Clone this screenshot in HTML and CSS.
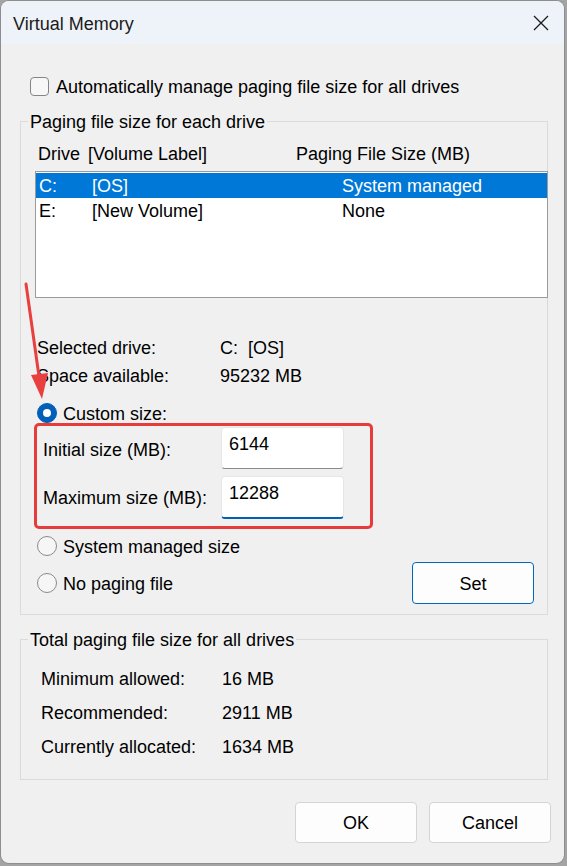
FILE: index.html
```html
<!DOCTYPE html>
<html>
<head>
<meta charset="utf-8">
<title>Virtual Memory</title>
<link rel="stylesheet" href="styles.css">
</head>
<body>
<div class="window">
  <div class="titlebar">
    <span class="title">Virtual Memory</span>
    <svg class="close" viewBox="0 0 16 16" width="16" height="16"><path d="M1 1 L15 15 M15 1 L1 15" stroke="#1b1b1b" stroke-width="1.3" fill="none"/></svg>
  </div>
  <div class="content">
    <div class="check-row"><span class="checkbox"></span><span class="txt">Automatically manage paging file size for all drives</span></div>

    <fieldset class="group group-drive">
      <legend>Paging file size for each drive</legend>
      <div class="list-head"><span class="hc1">Drive</span><span class="hc2">[Volume Label]</span><span>Paging File Size (MB)</span></div>
      <div class="listbox">
        <div class="lrow sel"><span class="c1">C:</span><span class="c2">[OS]</span><span>System managed</span></div>
        <div class="lrow"><span class="c1">E:</span><span class="c2">[New Volume]</span><span>None</span></div>
      </div>
      <div class="info first"><span class="ilabel">Selected drive:</span><span>C:&nbsp; [OS]</span></div>
      <div class="info"><span class="ilabel">Space available:</span><span>95232 MB</span></div>
      <div class="radio-row custom"><span class="radio on"></span><span class="txt">Custom size:</span></div>
      <div class="redbox">
        <div class="frow"><span class="flabel">Initial size (MB):</span><div class="field">6144</div></div>
        <div class="frow second"><span class="flabel">Maximum size (MB):</span><div class="field focus">12288</div></div>
      </div>
      <div class="radio-row sys"><span class="radio"></span><span class="txt">System managed size</span></div>
      <div class="set-row">
        <div class="radio-row"><span class="radio"></span><span class="txt">No paging file</span></div>
        <div class="btn default set">Set</div>
      </div>
    </fieldset>

    <fieldset class="group group-total">
      <legend>Total paging file size for all drives</legend>
      <div class="trow first"><span class="tlabel">Minimum allowed:</span><span>16 MB</span></div>
      <div class="trow"><span class="tlabel">Recommended:</span><span>2911 MB</span></div>
      <div class="trow"><span class="tlabel">Currently allocated:</span><span>1634 MB</span></div>
    </fieldset>

    <div class="buttons">
      <div class="btn">OK</div>
      <div class="btn">Cancel</div>
    </div>
  </div>
</div>
<svg class="arrow" width="60" height="410" viewBox="0 0 60 410">
  <line x1="26" y1="284" x2="39.5" y2="380" stroke="#e8403f" stroke-width="3" stroke-linecap="round"/>
  <polygon points="42,399 31,375 48,373" fill="#e8403f"/>
</svg>
</body>
</html>
```
FILE: styles.css
```css
* { box-sizing: border-box; }
html, body { margin: 0; padding: 0; }
body {
  background: #a4a4a4;
  width: 567px;
  height: 866px;
  overflow: hidden;
  position: relative;
  font-family: "Liberation Sans", Arial, sans-serif;
  font-size: 18px;
  color: #000;
}
.window {
  margin: 1px 0 0 1px;
  width: 563px;
  height: 862px;
  background: #f0f0f0;
  border-radius: 8px;
  overflow: hidden;
  box-shadow: 0 0 0 1px #8e8e8e;
  display: flex;
  flex-direction: column;
}
.titlebar {
  height: 43px;
  flex: none;
  background: #eef3f9;
  display: flex;
  align-items: center;
  justify-content: space-between;
  padding: 0 15px 0 12px;
}
.title { color: #1b1b1b; padding-top: 3px; }
.close { display: block; margin-top: 1px; }
.content { padding: 0 16px 0 19px; }
.txt { padding-top: 3px; }

.check-row { margin-top: 30px; height: 24px; display: flex; align-items: center; padding-left: 10px; }
.checkbox {
  width: 19px; height: 19px;
  border: 1px solid #858585; border-radius: 4px;
  background: #f7f7f7; margin-right: 7px; flex: none;
}

.group {
  margin: 12px 0 0;
  padding: 0 0 10px;
  border: 1px solid #dadada;
  min-width: 0;
}
.group legend { margin-left: 7px; padding: 0 2px; line-height: 25px; height: 22px; }
.group-total { margin-top: 13px; padding-bottom: 16px; }

.list-head { margin-top: 9px; height: 24px; line-height: 26px; display: flex; padding-left: 17px; }
.hc1 { width: 50px; }
.hc2 { width: 208px; }

.listbox {
  margin: 6px -1px 0 14px;
  height: 127px;
  border: 1px solid #9b9b9b;
  background: #fff;
  padding-top: 1px;
}
.lrow { display: flex; height: 25px; line-height: 27px; padding-left: 3px; }
.lrow.sel { background: #0078d7; color: #fff; }
.c1 { width: 53px; }
.c2 { width: 250px; }

.info { display: flex; height: 28px; line-height: 30px; padding-left: 16px; }
.info.first { margin-top: 35px; }
.ilabel { width: 183px; }

.radio-row { display: flex; align-items: center; padding-left: 16px; height: 24px; }
.radio-row.custom { margin-top: 14px; height: 20px; }
.radio-row.sys { margin-top: 5px; }
.radio {
  width: 20px; height: 20px; border-radius: 50%;
  border: 1px solid #8a8a8a; background: #f6f6f6;
  margin-right: 6px; flex: none;
  display: flex; align-items: center; justify-content: center;
}
.radio.on { background: #005fb8; border-color: #005fb8; }
.radio.on::after { content: ""; width: 8px; height: 8px; border-radius: 50%; background: #fff; }

.redbox {
  margin-left: 13px;
  width: 339px;
  border: 3px solid #e63c3c;
  border-radius: 5px;
  padding: 1px 26px 7px 6px;
}
.frow { display: flex; align-items: center; height: 42px; }
.frow.second { margin-top: 7px; height: 43px; }
.flabel { width: 178px; padding-top: 4px; }
.frow.second .flabel { padding-top: 1px; }
.field {
  width: 123px; height: 100%;
  background: #fff;
  border: 1px solid #e6e6e6;
  border-bottom-color: #8a8a8a;
  border-radius: 4px;
  padding: 4px 0 0 7px;
  line-height: 25px;
}
.field.focus { border-bottom: 2px solid #005fb8; }

.set-row { display: flex; align-items: center; justify-content: space-between; margin-top: 4px; height: 42px; padding-right: 13px; }
.set-row .radio-row { padding-left: 16px; }

.btn {
  width: 122px; height: 41px;
  background: #fdfdfd;
  border: 1px solid #d4d4d4;
  border-radius: 4px;
  display: flex; align-items: center; justify-content: center;
  padding-top: 2px;
}
.btn.default { border-color: #0067c0; }
.btn.set { height: 42px; padding-top: 3px; }

.trow { display: flex; height: 34px; line-height: 36px; padding-left: 20px; }
.trow.first { margin-top: 11px; }
.tlabel { width: 181px; }

.buttons { display: flex; justify-content: flex-end; gap: 12px; margin: 22px -3px 0 0; }

.arrow { position: absolute; left: 0; top: 0; pointer-events: none; }
```
